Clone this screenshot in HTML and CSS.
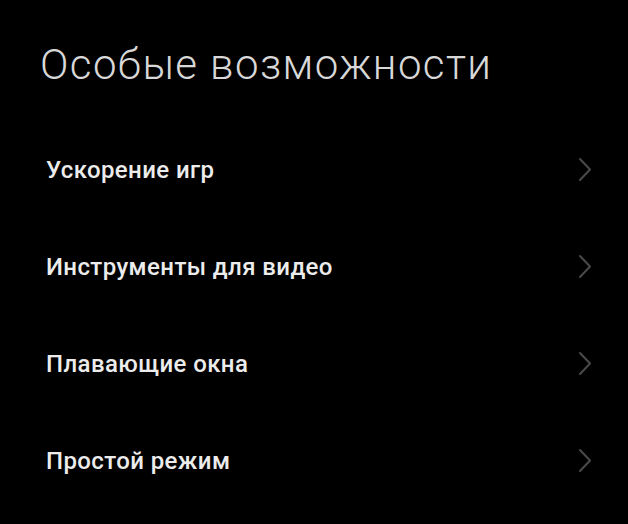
FILE: index.html
```html
<!DOCTYPE html>
<html lang="ru">
<head>
<meta charset="utf-8">
<link rel="stylesheet" href="styles.css">
</head>
<body>
<div class="screen">
  <h1 class="title">Особые возможности</h1>
  <ul class="list">
    <li class="item"><span class="label">Ускорение игр</span><svg class="chev" viewBox="0 0 14 25" width="14" height="25"><path d="M2 2 L12 12.5 L2 23" fill="none" stroke="#4a4a4a" stroke-width="2" stroke-linecap="round" stroke-linejoin="round"/></svg></li>
    <li class="item"><span class="label">Инструменты для видео</span><svg class="chev" viewBox="0 0 14 25" width="14" height="25"><path d="M2 2 L12 12.5 L2 23" fill="none" stroke="#4a4a4a" stroke-width="2" stroke-linecap="round" stroke-linejoin="round"/></svg></li>
    <li class="item"><span class="label">Плавающие окна</span><svg class="chev" viewBox="0 0 14 25" width="14" height="25"><path d="M2 2 L12 12.5 L2 23" fill="none" stroke="#4a4a4a" stroke-width="2" stroke-linecap="round" stroke-linejoin="round"/></svg></li>
    <li class="item"><span class="label">Простой режим</span><svg class="chev" viewBox="0 0 14 25" width="14" height="25"><path d="M2 2 L12 12.5 L2 23" fill="none" stroke="#4a4a4a" stroke-width="2" stroke-linecap="round" stroke-linejoin="round"/></svg></li>
  </ul>
</div>
</body>
</html>
```

FILE: styles.css
```css
html, body {
  margin: 0;
  padding: 0;
  background: #000;
}
.screen {
  width: 628px;
  height: 524px;
  background: #000;
  font-family: Roboto, "Noto Sans", sans-serif;
  overflow: hidden;
}
.title {
  margin: 0;
  padding: 40px 0 0 40px;
  font-weight: 300;
  font-size: 42px;
  line-height: 50px;
  color: #d8d8d8;
  letter-spacing: 1.4px;
}
.list {
  list-style: none;
  margin: 0;
  padding: 0;
  margin-top: 31px;
}
.item {
  display: flex;
  align-items: center;
  justify-content: space-between;
  height: 97px;
  padding: 0 36px 0 46px;
}
.label {
  font-weight: 500;
  font-size: 24px;
  letter-spacing: 0.4px;
  color: #ececec;
}
.chev {
  display: block;
}
```
